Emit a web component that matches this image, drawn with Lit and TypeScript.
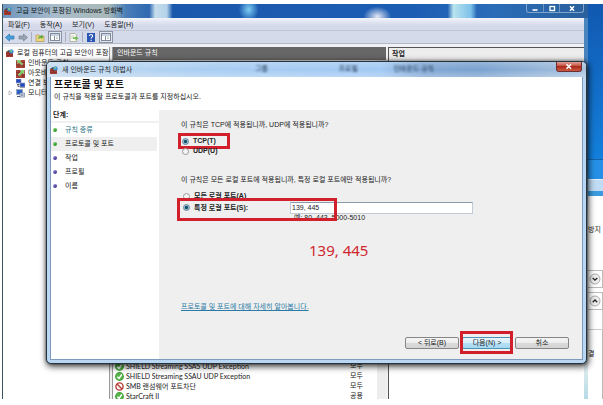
import { LitElement, html, css, svg } from "lit";
import { customElement, state } from "lit/decorators.js";

const firewallIcon = html`<svg class="ic8" viewBox="0 0 8 8" aria-hidden="true">
  <rect x="0" y="3" width="7" height="5" fill="#b0453a" />
  <path d="M0 4.6h7M0 6.3h7M2 3v1.6M5 3v1.6M3.5 4.6v1.7M2 6.3V8M5 6.3V8" stroke="#5c1712" stroke-width=".4" />
  <path d="M0 3 3 1l4 2z" fill="#46424a" />
  <circle cx="5.4" cy="2.4" r="2.2" fill="#3f93cf" />
  <path d="M4 1.6c1-1 2-.6 2.2.2L5 3.2z" fill="#8ed07c" />
</svg>`;

const brickIcon = (down: boolean) => html`<svg class="ic9" viewBox="0 0 9 9" aria-hidden="true">
  <rect x="0" y="1" width="9" height="8" fill="#a8483b" />
  <path d="M0 3.5h9M0 6h9M3 1v2.5M6 3.5V6M3 6v3M7 6v3" stroke="#64201a" stroke-width=".5" />
  <path d=${down ? "M1 1l4 0-1.2 1.2L7 5 5.6 6 3 3.400 1.800 4.600z" : "M8 1v4L6.800 3.800 3.500 7 2.200 5.800 5.300 2.300 4 1z"} fill="#6fce58" stroke="#d8f3cf" stroke-width=".4" />
</svg>`;

const computersIcon = html`<svg class="ic9" viewBox="0 0 9 9" aria-hidden="true">
  <rect x="0" y="0" width="5" height="4" fill="#2448c0" stroke="#8d9ab5" stroke-width=".7" />
  <rect x="4" y="4" width="5" height="4" fill="#2448c0" stroke="#8d9ab5" stroke-width=".7" />
  <path d="M1 5.500h2.500M2 5.500v2h1.500M4 9h5" stroke="#333c52" stroke-width=".8" fill="none" />
</svg>`;

const monitorIcon = html`<svg class="ic9" viewBox="0 0 9 9" aria-hidden="true">
  <rect x=".5" y=".5" width="6" height="5" fill="#2b62c8" stroke="#9aa7bd" />
  <rect x="4" y="4" width="4.500" height="4" fill="#dfe7f3" stroke="#6e7f9c" stroke-width=".7" />
  <path d="M1 7.500h3M5 6h2.500" stroke="#4b5a78" />
</svg>`;

const allowIcon = html`<svg class="ic9" viewBox="0 0 9 9" role="img" aria-label="허용">
  <circle cx="4.500" cy="4.500" r="4.400" fill="#3c9b35" />
  <circle cx="4.500" cy="4.500" r="3.400" fill="#56b54b" />
  <path d="M2.300 4.700 4 6.500 6.800 2.500" stroke="#fff" stroke-width="1.400" fill="none" />
</svg>`;

const blockIcon = html`<svg class="ic9" viewBox="0 0 9 9" role="img" aria-label="차단">
  <circle cx="4.500" cy="4.500" r="3.600" fill="#fff" stroke="#b83a34" stroke-width="1.400" />
  <path d="M2 2l5 5" stroke="#b83a34" stroke-width="1.400" />
</svg>`;

const panelGlyph = svg`<rect x=".5" y=".5" width="9" height="7" fill="#fff" stroke="#7c8a9c"/>
  <path d="M1 2h8" stroke="#8fa6c4"/><path d="M4.500 3v4" stroke="#7c8a9c"/>
  <path d="M6 4h2M6 5.500h2" stroke="#9fb0a0" stroke-width=".7"/>`;

const chevron = (up: boolean) => html`<svg class="chev" viewBox="0 0 12 12" aria-hidden="true">
  <circle cx="6" cy="6" r="5" fill="#eee" stroke="#999" stroke-width=".8" />
  <path d=${up ? "M3.700 7.200 6 5l2.300 2.200" : "M3.700 5 6 7.200 8.300 5"} stroke="#222" stroke-width="1.300" fill="none" />
</svg>`;

@customElement("app-root")
export class AppRoot extends LitElement {
  @state() private protocol = "tcp";
  @state() private scope = "specific";

  private steps = ["규칙 종류", "프로토콜 및 포트", "작업", "프로필", "이름"];
  private rules = [
    { name: "SHIELD Streaming SSAS UDP Exception", profile: "모두", allow: true },
    { name: "SHIELD Streaming SSAU UDP Exception", profile: "모두", allow: true },
    { name: "SMB 랜섬웨어 포트차단", profile: "모두", allow: false },
    { name: "StarCraft II", profile: "공용", allow: true },
  ];

  static styles = css`
    :host {
      display: block;
      min-height: 100vh;
      background: #fff;
      color: #222;
      font: 7px/10px "Liberation Sans", "Noto Sans CJK KR", sans-serif;
      box-sizing: border-box;
      padding: 4px 0 6px 2px;
    }
    * { box-sizing: border-box; }
    svg { display: block; flex: none; }
    button, input { font: inherit; color: inherit; margin: 0; }
    button { border: 0; padding: 0; background: none; }
    ul { list-style: none; margin: 0; padding: 0; }
    h1, h2, p { margin: 0; font: inherit; }
    .ic8 { width: 8px; height: 8px; }
    .ic9 { width: 9px; height: 9px; }

    .desktop {
      position: relative;
      display: grid;
      grid-template-columns: minmax(0, 1fr) 15px;
      min-height: calc(100vh - 10px);
      overflow: hidden;
    }

    /* console window */
    .console {
      display: flex;
      flex-direction: column;
      border-left: 1px solid #3d5560;
      background: #fff;
      min-width: 0;
    }
    .caption {
      height: 14px;
      display: flex;
      align-items: center;
      gap: 4px;
      padding: 0 4px 0 1px;
      color: #101820;
      background:
        linear-gradient(90deg, transparent 25%, #c5ddec 26%, #b4d2e8 28%, transparent 29%),
        radial-gradient(ellipse 10px 12px at 42% 40%, #7ccdf4, transparent),
        radial-gradient(ellipse 14px 10px at 64% 90%, #e6e8f4, transparent),
        linear-gradient(90deg, transparent 76%, #b8e4ee 77%, #7cc0ea 80%, transparent 81%),
        linear-gradient(90deg, #6f97bd, #a9bccb 9%, #a9b8b8 18%, #4a7eb8 21%, #1a58ac 28%, #1c5db4 70%, #2a6cb8 84%, #2a609c);
    }
    .caption h1 { flex: 1; }
    .controls {
      display: flex;
      align-self: flex-start;
      height: 9px;
      border: 1px solid #7fa5cc;
      border-top: 0;
      border-radius: 0 0 3px 3px;
    }
    .controls button { width: 16px; display: grid; place-items: center; }
    .controls button:last-child { width: 24px; }
    .controls button + button { border-left: 1px solid #6d96c0; }
    .controls svg { width: 8px; height: 7px; }
    .frame {
      flex: 1;
      display: flex;
      flex-direction: column;
      padding-right: 4px;
      background: linear-gradient(#4a84bd 150px, #dfeaf0 200px, #e8eff2 90%, #b5dbe6);
      min-height: 0;
    }
    .menu {
      height: 13px;
      display: flex;
      align-items: center;
      gap: 10px;
      padding: 1px 5px 0;
      background: linear-gradient(#f2f4fa, #d5daeb 60%);
      border-bottom: 1px solid #bfc5d4;
    }
    .tools {
      height: 13px;
      display: flex;
      align-items: center;
      gap: 3px;
      padding: 0 2px;
      background: #d5daeb;
      border-bottom: 1px solid #b4b9c6;
    }
    .tools button { width: 10px; height: 11px; display: grid; place-items: center; }
    .tools button.on { width: 14px; height: 12px; border: 1px solid #8d93a0; background: #e3e6ee; }
    .tools svg { width: 10px; height: 9px; }
    .tools .bar { width: 1px; height: 10px; background: #a9afbe; }
    .panes {
      flex: 1;
      display: grid;
      grid-template-columns: 107px minmax(0, 274px) minmax(0, 1fr);
      column-gap: 2px;
      border-top: 3px solid #f0f1f5;
      background: #f0f0f0;
    }
    .tree { background: #fff; padding-top: 1px; border-right: 1px solid #999; overflow: hidden; }
    .tree li { display: flex; align-items: center; gap: 3px; height: 10px; white-space: nowrap; padding-left: 3px; }
    .tree .child { padding-left: 13px; }
    .tree .more { padding-left: 5px; }
    .twist { width: 5px; height: 6px; }
    .list { display: flex; flex-direction: column; background: #fff; border-left: 1px solid #999; }
    .panehead {
      height: 13px;
      padding: 1px 4px;
      color: #fff;
      background: #666;
    }
    .listbody {
      flex: 1;
      display: flex;
      align-items: flex-end;
      border-right: 9px solid #ededed;
      padding-left: 2px;
    }
    table { width: 100%; border-collapse: collapse; margin-bottom: -2px; }
    td { padding: 0; height: 10px; white-space: nowrap; }
    .name { display: flex; align-items: center; gap: 2px; font-family: Lato, "Noto Sans CJK KR", sans-serif; }
    .profile { width: 27px; }
    .actions { background: #fff; border-left: 1px solid #555; border-top: 1px solid #555; }
    .actions h2 { height: 12px; padding: 1px 3px; font-weight: bold; background: #ededed; }

    /* neighbouring window at the screen edge */
    .edge { display: flex; flex-direction: column; background: #fff; white-space: nowrap; }
    .sky { height: 155px; background: linear-gradient(#1158b0, #1380dc); }
    .glass { height: 20px; background: #2690e6; border-top: 1px solid #1462a8; }
    .address { height: 17px; background: #c0dcf5; border-bottom: 5px solid #3a9be0; border-top: 1px solid #e4f0fb; }
    .note { height: 74px; padding-top: 29px; }
    .section { height: 18px; border: 1px solid #bbb; border-left: 0; display: grid; place-items: center; }
    .section + .section { margin-top: 4px; }
    .detail { height: 20px; border: 1px solid #ccc; border-width: 0 1px 1px 0; }
    .result { flex: 1; padding-top: 19px; border-right: 1px solid #bbb; }
    .chev { width: 12px; height: 12px; }

    /* wizard */
    .wizard {
      position: absolute;
      top: 57px;
      left: 44px;
      right: 16px;
      display: flex;
      flex-direction: column;
      border: 1px solid #27323f;
      border-radius: 5px;
      background: #b9d6f2;
      padding: 0 3px 3px;
      box-shadow: 1px 2px 6px 1px #000a, 0 0 3px #0008;
    }
    .title {
      position: relative;
      height: 15px;
      margin: 0 -3px;
      padding: 0 4px 0 3px;
      display: flex;
      align-items: center;
      gap: 4px;
      border-radius: 4px 4px 0 0;
      background: linear-gradient(#fff3, transparent 50%, #fff4), linear-gradient(90deg, #c6dcef, #a9cdf2 30%, #a2c9f3 62%, #82a8d4 70%, #7aa2cf 80%, #a8c3e0);
    }
    .title h2 { flex: 1; }
    .ghost {
      position: absolute;
      inset: 2px 152px 3px 208px;
      display: flex;
      justify-content: space-between;
      color: #203650;
      filter: blur(1px);
    }
    .close {
      align-self: flex-start;
      width: 26px;
      height: 10px;
      display: grid;
      place-items: center;
      background: linear-gradient(#e0a097, #c8503f 45%, #a92a1c 50%, #cf5a42);
      border: 1px solid #6b3030;
      border-top: 0;
      border-radius: 0 0 3px 3px;
    }
    .close svg { width: 8px; height: 7px; }
    .page { border: 1px solid #7d9cbd; border-width: 0 1px 1px; background: #efefef; }
    .intro { height: 33px; background: #fff; padding: 2px 3px; }
    .intro h1 { font-size: 10px; line-height: 12px; font-weight: bold; color: #111; }
    .intro p { margin-top: 1px; }
    .body { display: grid; grid-template-columns: 108px minmax(0, 1fr); }
    .steps { background: #fff; }
    .steps h2 { height: 13px; padding: 0 2px; font-weight: bold; border-bottom: 2px solid #f1f1f1; }
    .steps li { height: 14px; display: flex; align-items: center; gap: 8px; padding-left: 2px; margin-right: 2px; }
    .steps li::before {
      content: "";
      width: 4px;
      height: 4px;
      border-radius: 2px;
      background: linear-gradient(135deg, #b9b5e8, #4a429c 60%);
    }
    .steps .done { color: #1d7080; }
    .steps .done::before, .steps .current::before { background: linear-gradient(135deg, #a7e09b, #35a02c 60%); }
    .steps .current { background: #efefef; }
    .form { padding: 10px 13px 10px 22px; }
    .choices { margin-top: 6px; padding-left: 1px; }
    .choices.ports { padding-left: 2px; }
    .ask2 { margin-top: 19px; }
    .choice { position: relative; display: flex; align-items: center; height: 10px; font-weight: bold; }
    .choice label { display: flex; align-items: center; gap: 4px; white-space: nowrap; }
    .choice.port { height: 13px; }
    .choice.port label { width: 107px; }
    input[type="radio"] {
      appearance: none;
      width: 7px;
      height: 7px;
      border: 1px solid #999;
      border-radius: 50%;
      background: #f4f4f4;
    }
    input[type="radio"]:checked {
      border-color: #6d8496;
      background: radial-gradient(#12506e 35%, #9cc9dc 60%);
    }
    .box {
      flex: 1;
      min-width: 0;
      height: 12px;
      margin-right: 96px;
      padding: 0 1px;
      border: 1px solid #c3ccd6;
      border-top-color: #8a9aa8;
      background: #fff;
      font-weight: normal;
      border-radius: 0;
    }
    .mark { position: absolute; border: 3px solid #d1202b; pointer-events: none; }
    .mark.tcp { left: -4px; top: -3px; width: 52px; height: 16px; }
    .mark.port { left: -6px; top: -3px; width: 160px; height: 23px; z-index: 1; }
    .mark.next { inset: -6px -1px -5px -2px; }
    .sample { padding-left: 113px; line-height: 8px; }
    .callout {
      margin: 18px 0 0 128px;
      font: 15px/20px "Noto Sans", sans-serif;
      color: #cf2730;
    }
    .help { margin-top: 42px; }
    a { color: #2a7aa5; }
    .buttons { display: flex; justify-content: flex-end; gap: 3px; margin-top: 25px; }
    .slot { position: relative; width: 54px; }
    .slot.main { width: 50px; }
    .slot button {
      display: block;
      width: 100%;
      height: 12px;
      border: 1px solid #858585;
      border-radius: 2px;
      background: linear-gradient(#f5f5f5, #ececec 50%, #dadada 50%, #d4d4d4);
    }
    .slot.main button { border-color: #4c93b4; background: linear-gradient(#e8f5fc, #d4eefb 50%, #b4e0f5 50%, #a5d8f0); }
  `;

  private radio(name: string, value: string, current: string, pick: (v: string) => void, text: string) {
    return html`<label><input type="radio" name=${name} .checked=${current === value} @change=${() => pick(value)} />${text}</label>`;
  }

  private renderToolbar() {
    return html`<div class="tools" role="toolbar">
      <button aria-label="뒤로"><svg viewBox="0 0 10 9"><path d="M.5 4.500 4.500 1v2H9v3H4.500v2z" fill="#4aa3df" stroke="#2670ad" stroke-width=".7"/></svg></button>
      <button aria-label="앞으로"><svg viewBox="0 0 10 9"><path d="M9.500 4.500 5.500 1v2H1v3h4.500v2z" fill="#9aa5b3" stroke="#76818f" stroke-width=".7"/></svg></button>
      <span class="bar"></span>
      <button aria-label="위로"><svg viewBox="0 0 10 9"><path d="M1 2h3l1 1h4v5.500H1z" fill="#ecd682" stroke="#b39a4b" stroke-width=".7"/><path d="M3 6c0-2 1-3 3-3V1.500L8.500 4 6 6V5C5 5 4 5 3 6z" fill="#5eaa3e"/></svg></button>
      <button class="on" aria-label="트리 표시"><svg viewBox="0 0 10 9">${panelGlyph}</svg></button>
      <span class="bar"></span>
      <button aria-label="내보내기"><svg viewBox="0 0 10 9"><path d="M1 .5h5l1.500 1.500v6.500H1z" fill="#fdfdf4" stroke="#999c88" stroke-width=".7"/><path d="M2 3h3M2 5h2" stroke="#9aa" stroke-width=".6"/><path d="M4 4.300h2.500V3l3 2.200-3 2.300V6H4z" fill="#72bd55"/></svg></button>
      <span class="bar"></span>
      <button aria-label="도움말"><svg viewBox="0 0 10 9"><rect x="1" width="8" height="9" fill="#2c55b4"/><path d="M3.500 3c0-2 3.200-1.800 3.200 0 0 1.200-1.600 1.200-1.600 2.600M5.100 6.700v1.200" stroke="#fff" stroke-width="1.100" fill="none"/></svg></button>
      <button class="on" aria-label="작업 창 표시"><svg viewBox="0 0 10 9">${panelGlyph}</svg></button>
    </div>`;
  }

  private renderConsole() {
    return html`<section class="console">
      <header class="caption">
        ${firewallIcon}
        <h1>고급 보안이 포함된 Windows 방화벽</h1>
        <div class="controls">
          <button aria-label="최소화"><svg viewBox="0 0 8 7"><path d="M1.500 5h5" stroke="#fff" stroke-width="1.600"/></svg></button>
          <button aria-label="최대화"><svg viewBox="0 0 8 7"><rect x="2" y="1.500" width="4.500" height="4" fill="none" stroke="#fff" stroke-width="1.300"/></svg></button>
          <button aria-label="닫기"><svg viewBox="0 0 8 7"><path d="M2 1.300 6 5.700M6 1.300 2 5.700" stroke="#fff" stroke-width="1.500"/></svg></button>
        </div>
      </header>
      <div class="frame">
        <nav class="menu"><span>파일(F)</span><span>동작(A)</span><span>보기(V)</span><span>도움말(H)</span></nav>
        ${this.renderToolbar()}
        <div class="panes">
          <ul class="tree">
            <li>${firewallIcon}로컬 컴퓨터의 고급 보안이 포함된</li>
            <li class="child">${brickIcon(true)}인바운드 규칙</li>
            <li class="child">${brickIcon(false)}아웃바운드 규칙</li>
            <li class="child">${computersIcon}연결 보안 규칙</li>
            <li class="more"><svg class="twist" viewBox="0 0 5 6"><path d="M1 1l3 2-3 2z" fill="#fff" stroke="#999" stroke-width=".6"/></svg>${monitorIcon}모니터링</li>
          </ul>
          <div class="list">
            <h2 class="panehead">인바운드 규칙</h2>
            <div class="listbody">
              <table>
                ${this.rules.map((r) => html`<tr>
                  <td><div class="name">${r.allow ? allowIcon : blockIcon}${r.name}</div></td>
                  <td class="profile">${r.profile}</td>
                </tr>`)}
              </table>
            </div>
          </div>
          <aside class="actions"><h2>작업</h2></aside>
        </div>
      </div>
    </section>`;
  }

  private renderEdge() {
    return html`<aside class="edge">
      <div class="sky"></div>
      <div class="glass"></div>
      <div class="address"></div>
      <div class="note">방지</div>
      <div class="section">${chevron(false)}</div>
      <div class="section">${chevron(true)}</div>
      <div class="detail"></div>
      <div class="result">결</div>
    </aside>`;
  }

  private renderWizard() {
    const setProtocol = (v: string) => { this.protocol = v; };
    const setScope = (v: string) => { this.scope = v; };
    return html`<section class="wizard" role="dialog" aria-label="새 인바운드 규칙 마법사">
      <header class="title">
        ${firewallIcon}
        <h2>새 인바운드 규칙 마법사</h2>
        <div class="ghost" aria-hidden="true"><span>그룹</span><span></span><span>프로필</span><span>인바운드 규칙</span></div>
        <button class="close" aria-label="닫기"><svg viewBox="0 0 8 7"><path d="M1.500 1.300 6 5.700M6 1.300 1.500 5.700" stroke="#fff" stroke-width="1.600"/></svg></button>
      </header>
      <div class="page">
        <div class="intro">
          <h1>프로토콜 및 포트</h1>
          <p>이 규칙을 적용할 프로토콜과 포트를 지정하십시오.</p>
        </div>
        <div class="body">
          <nav class="steps">
            <h2>단계:</h2>
            <ul>
              ${this.steps.map((s, i) => html`<li class=${i === 0 ? "done" : i === 1 ? "current" : "todo"}>${s}</li>`)}
            </ul>
          </nav>
          <form class="form" @submit=${(e: Event) => e.preventDefault()}>
            <p>이 규칙은 TCP에 적용됩니까, UDP에 적용됩니까?</p>
            <div class="choices">
              <div class="choice">${this.radio("protocol", "tcp", this.protocol, setProtocol, "TCP(T)")}<span class="mark tcp"></span></div>
              <div class="choice">${this.radio("protocol", "udp", this.protocol, setProtocol, "UDP(U)")}</div>
            </div>
            <p class="ask2">이 규칙은 모든 로컬 포트에 적용됩니까, 특정 로컬 포트에만 적용됩니까?</p>
            <div class="choices ports">
              <div class="choice">${this.radio("scope", "all", this.scope, setScope, "모든 로컬 포트(A)")}</div>
              <div class="choice port">
                ${this.radio("scope", "specific", this.scope, setScope, "특정 로컬 포트(S):")}
                <input class="box" type="text" aria-label="특정 로컬 포트" value="139, 445" />
                <span class="mark port"></span>
              </div>
            </div>
            <p class="sample">예: 80, 443, 5000-5010</p>
            <p class="callout">139, 445</p>
            <p class="help"><a href="#ports">프로토콜 및 포트에 대해 자세히 알아봅니다.</a></p>
            <div class="buttons">
              <div class="slot"><button type="button">&lt; 뒤로(B)</button></div>
              <div class="slot main"><button type="submit">다음(N) &gt;</button><span class="mark next"></span></div>
              <div class="slot"><button type="button">취소</button></div>
            </div>
          </form>
        </div>
      </div>
    </section>`;
  }

  render() {
    return html`<main class="desktop">${this.renderConsole()}${this.renderEdge()}${this.renderWizard()}</main>`;
  }
}
